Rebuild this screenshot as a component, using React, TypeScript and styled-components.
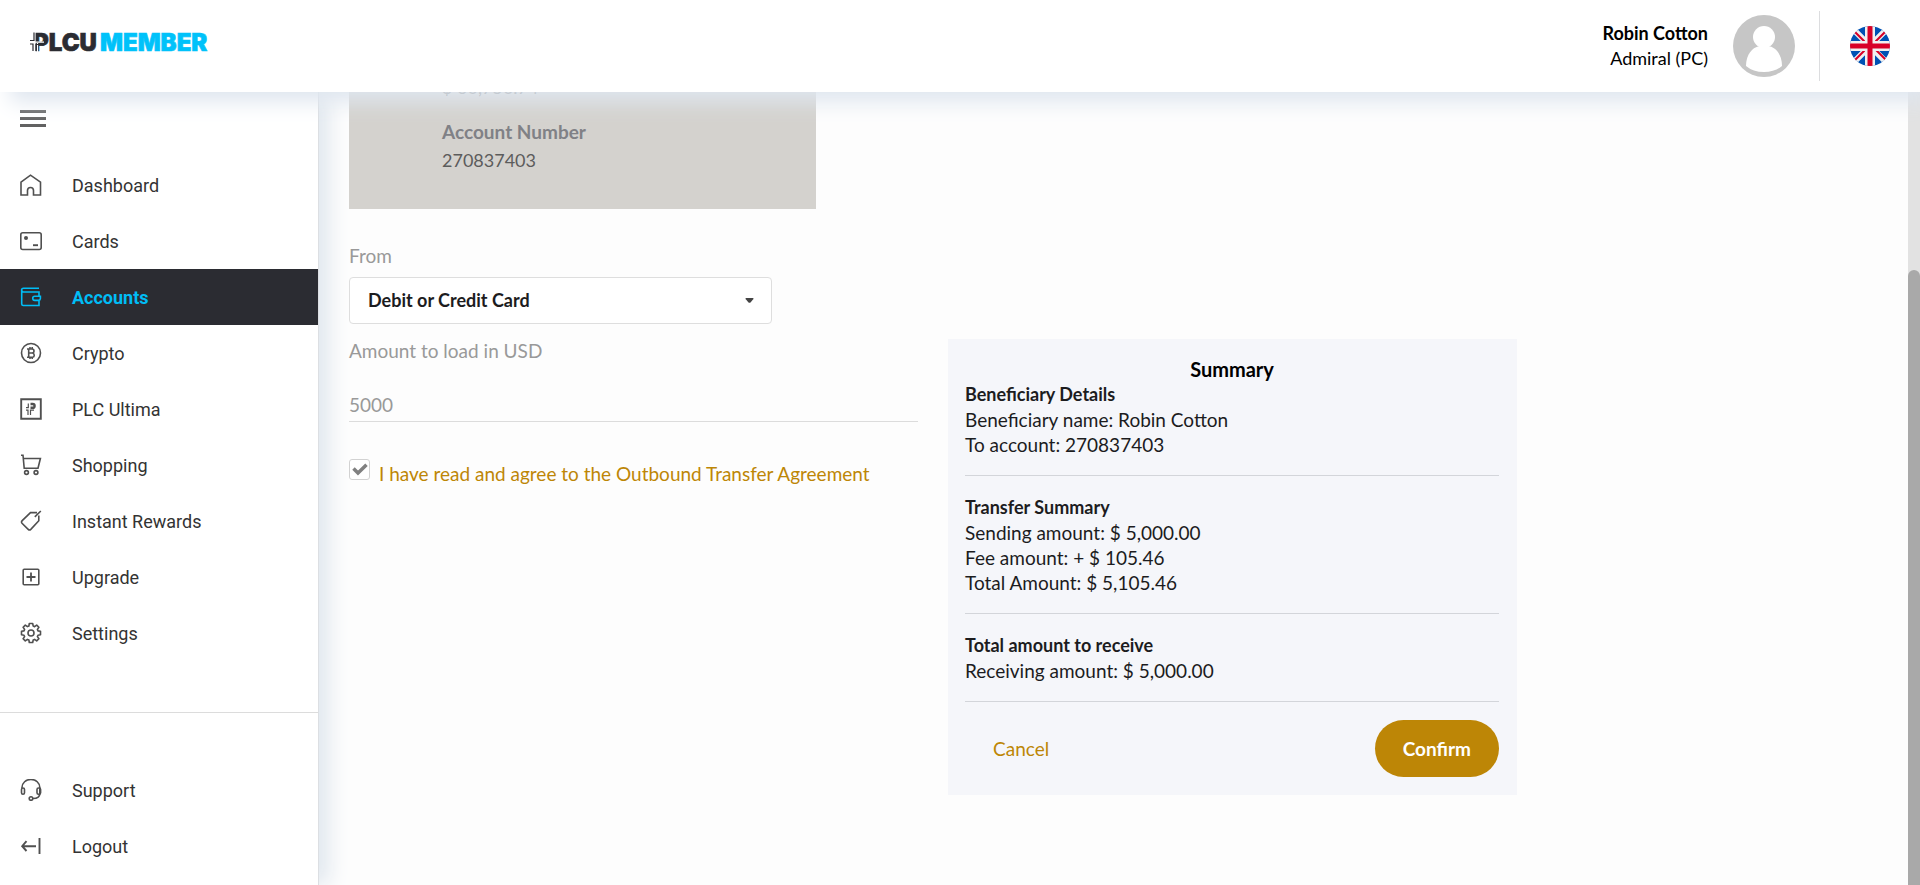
import React from "react";
import styled, { createGlobalStyle } from "styled-components";

const GlobalStyle = createGlobalStyle`
  *, *::before, *::after { box-sizing: border-box; }
  body {
    margin: 0;
    background: #fdfdfd;
    color: #1c1c1e;
    font: 400 18px/25px Lato, "Liberation Sans", sans-serif;
  }
  button, input, select { font: inherit; }
  h2, h3, p { margin: 0; }
`;

const Page = styled.div`
  display: flex;
  flex-direction: column;
  height: 100vh;
  overflow: hidden;
`;

const Header = styled.header`
  position: relative;
  z-index: 2;
  flex: none;
  display: flex;
  align-items: center;
  height: 92px;
  padding: 0 30px;
  background: #fff;
  box-shadow: 10px 10px 20px #dfe6ef;
`;

const LogoLink = styled.a`
  display: block;
  margin: 0 auto 8px 0;
  svg { display: block; }
`;

const UserInfo = styled.div`
  color: #000;
  text-align: right;
`;

const UserName = styled.div`
  font-weight: 700;
`;

const Avatar = styled.svg`
  margin: 0 24px 0 25px;
`;

const LanguageButton = styled.button`
  display: flex;
  align-items: center;
  height: 70px;
  padding: 0 0 0 30px;
  border: 0;
  border-left: 1px solid #dcdddf;
  background: none;
`;

const Body = styled.div`
  flex: 1;
  display: flex;
  min-height: 0;
`;

const Sidebar = styled.aside`
  position: relative;
  z-index: 1;
  flex: none;
  width: 319px;
  border-right: 1px solid #dcdfe3;
  background: #fff;
  box-shadow: 10px 0 20px #e0e7ee;
  font-family: Roboto, "Liberation Sans", sans-serif;
`;

const MenuButton = styled.button`
  display: flex;
  flex-direction: column;
  gap: 4px;
  margin: 18px 20px 30px;
  padding: 0;
  border: 0;
  background: none;
  span { width: 26px; height: 3px; background: #616161; }
`;

const NavList = styled.ul`
  margin: 0;
  padding: 0;
  list-style: none;
`;

const FooterNav = styled(NavList)`
  margin-top: 51px;
  padding-top: 49px;
  border-top: 1px solid #dcdcdc;
`;

const NavLink = styled.a<{ $active?: boolean }>`
  display: flex;
  align-items: center;
  gap: 30px;
  height: 56px;
  padding-left: 20px;
  background: ${(p) => (p.$active ? "#2b2c32" : "transparent")};
  color: ${(p) => (p.$active ? "#00bdf6" : "#333")};
  font-weight: ${(p) => (p.$active ? 700 : 400)};
  text-decoration: none;
  svg { color: ${(p) => (p.$active ? "#00bdf6" : "#505050")}; }
`;

const Main = styled.main`
  flex: 1;
  min-width: 0;
  padding: 0 30px;
`;

const AccountCard = styled.section`
  display: flex;
  flex-direction: column;
  justify-content: flex-end;
  max-width: 467px;
  height: 117px;
  padding: 0 93px 35px;
  overflow: hidden;
  background: #d4d2ce;
  color: #5c5c5c;
  line-height: 28px;
`;

const Balance = styled.p`
  margin-bottom: 17px;
`;

const CardLabel = styled.h3`
  color: #808186;
  font-size: 19px;
  font-weight: 700;
`;

const FieldLabel = styled.label`
  display: block;
  color: #999;
  font-size: 19px;
  line-height: 23px;
`;

const FromField = styled.div`
  max-width: 423px;
  margin: 35px 0 15px;
`;

const SelectBox = styled.div`
  display: grid;
  align-items: center;
  margin-top: 10px;
  > * { grid-area: 1 / 1; }
  svg { justify-self: end; margin-right: 18px; pointer-events: none; }
`;

const Select = styled.select`
  width: 100%;
  height: 47px;
  padding: 0 18px;
  appearance: none;
  border: 1px solid #dedede;
  border-radius: 4px;
  background: #fff;
  color: #1c1c1e;
  font-weight: 700;
`;

const Columns = styled.div`
  display: grid;
  grid-template-columns: 1fr 1fr;
  align-items: start;
  gap: 30px;
  max-width: 1168px;
`;

const AmountInput = styled.input`
  width: 100%;
  height: 34px;
  margin: 26px 0 37px;
  padding: 0;
  border: 0;
  border-bottom: 1px solid #dcdcdc;
  background: none;
  color: #999;
  font-size: 19px;
`;

const Agreement = styled.div`
  display: flex;
  gap: 9px;
  color: #bd8606;
  font-size: 19px;
  label { padding-top: 2px; }
`;

const CheckBox = styled.span`
  display: grid;
  place-items: center;
  > * { grid-area: 1 / 1; }
  height: 21px;
  svg { pointer-events: none; }
  input {
    width: 21px;
    height: 21px;
    margin: 0;
    appearance: none;
    border: 1px solid #d2d2d2;
    border-radius: 3px;
    background: #fff;
  }
`;

const Summary = styled.section`
  padding: 17px 18px 18px 17px;
  background: #f5f6fa;
`;

const SummaryTitle = styled.h2`
  font-size: 20px;
  font-weight: 700;
  line-height: 26px;
  text-align: center;
  color: #000;
`;

const Group = styled.div`
  margin-bottom: 19px;
  padding-bottom: 18px;
  border-bottom: 1px solid #d3d5da;
  font-size: 19px;
  &:last-of-type { margin-bottom: 18px; }
`;

const GroupTitle = styled.h3`
  font-size: 18px;
  font-weight: 700;
`;

const Actions = styled.footer`
  display: flex;
  justify-content: space-between;
`;

const Button = styled.button<{ $primary?: boolean }>`
  height: 57px;
  padding: 0 28px;
  border: 0;
  border-radius: 29px;
  background: ${(p) => (p.$primary ? "#bd8606" : "none")};
  color: ${(p) => (p.$primary ? "#fff" : "#bd8606")};
  font-size: 19px;
  font-weight: ${(p) => (p.$primary ? 700 : 400)};
`;

const ScrollTrack = styled.div`
  flex: none;
  width: 12px;
  padding-top: 178px;
  background: #e2e2e2;
`;

const ScrollThumb = styled.div`
  height: 100%;
  border-radius: 6px 6px 0 0;
  background: #a9a9a9;
`;

const icons: Record<string, React.ReactNode> = {
  Dashboard: <path d="M1 21V8.200L10.500 1.200 20.500 8.200V21H13.500V16.500A3 3 0 0 0 7.500 16.500V21Z" />,
  Cards: (
    <>
      <rect x=".8" y="2.700" width="20.400" height="16.800" rx="2" />
      <circle cx="6" cy="8" r="2" fill="currentColor" stroke="none" />
      <path d="M13 15.200H18" strokeWidth="1.900" />
    </>
  ),
  Accounts: (
    <>
      <path d="M19 2.200H3.500A1.800 1.800 0 0 0 3.500 6H19V10M19 15V19.500H3.300A1.600 1.600 0 0 1 1.700 18V4" />
      <path d="M20.400 10.300H14.800A2 2 0 0 0 14.800 14.400H18.500A2 2 0 0 0 20.400 12.500Z" />
    </>
  ),
  Crypto: (
    <>
      <circle cx="11" cy="11" r="9.500" />
      <path d="M7 7H12A2 2 0 0 1 12 11H8.500H12.500A2.200 2.200 0 0 1 12.500 15.300H7M8.700 7V15M10 5V7M12.200 5V7M10 15V17M12.200 15V17" />
    </>
  ),
  "PLC Ultima": (
    <>
      <path d="M1.200 1.200H20.800V20.800H1.200Z" strokeWidth="1.900" />
      <path d="M6 9.700H8.300V5.500M6 12.200H8V17M10.500 17V12.200H14" strokeWidth="1.200" />
      <path d="M10.500 6H12.700A1.900 1.900 0 0 1 12.700 9.800H10.500" strokeWidth="2.400" />
    </>
  ),
  Shopping: (
    <>
      <path d="M1 1.200H3L4.200 14.200H18L20.400 4.500H3.500" />
      <circle cx="6.500" cy="18.500" r="1.900" />
      <circle cx="16" cy="18.500" r="1.900" />
    </>
  ),
  "Instant Rewards": (
    <>
      <path d="M18.800 5.500V10.800L10.800 19.400Q9.500 20.700 8.200 19.400L2 13.200Q.9 12 2.200 10.600L10.500 2.600H17" />
      <path d="M14.800 6.800L20.800 1" />
    </>
  ),
  Upgrade: (
    <>
      <rect x="3.200" y="3.200" width="15.600" height="15.600" rx="1" />
      <path d="M11 6.500V15.500M6.500 11H15.500" strokeWidth="1.800" />
    </>
  ),
  Settings: (
    <>
      <circle cx="11" cy="11" r="3" />
      <path d="M9.300 1.500H12.700L13.200 4.100 14.600 4.700 16.700 3.100 18.900 5.300 17.400 7.400 18 8.900 20.500 9.300V12.700L18 13.200 17.400 14.600 18.900 16.700 16.700 18.900 14.600 17.400 13.200 18 12.700 20.500H9.300L8.900 18 7.400 17.400 5.300 18.900 3.100 16.700 4.600 14.600 4 13.200 1.500 12.700V9.300L4 8.900 4.600 7.400 3.100 5.300 5.300 3.100 7.400 4.600 8.900 4Z" strokeLinejoin="round" />
    </>
  ),
  Support: (
    <>
      <path d="M2 9V8.500A8.800 8 0 0 1 19.800 8.500V14.500Q19.800 19.500 13 19.500" />
      <rect x="1.500" y="9" width="3" height="6.200" rx="1.500" />
      <rect x="17" y="9" width="3.600" height="6.200" rx="1.500" />
      <circle cx="11" cy="19.500" r="1.800" />
    </>
  ),
  Logout: (
    <>
      <path d="M2.200 11.200H16M6.500 6.200L2.200 11.200L6.500 16" strokeWidth="1.900" />
      <path d="M19.500 3V19" strokeWidth="1.900" />
    </>
  ),
};

function NavItem({ label, active }: { label: string; active?: boolean }) {
  return (
    <li>
      <NavLink href="#" $active={active} aria-current={active ? "page" : undefined}>
        <svg width="22" height="22" viewBox="0 0 22 22" fill="none" stroke="currentColor" strokeWidth="1.600" aria-hidden="true">
          {icons[label]}
        </svg>
        {label}
      </NavLink>
    </li>
  );
}

const mainLinks = ["Dashboard", "Cards", "Accounts", "Crypto", "PLC Ultima", "Shopping", "Instant Rewards", "Upgrade", "Settings"];
const footerLinks = ["Support", "Logout"];

const groups = [
  { title: "Beneficiary Details", lines: ["Beneficiary name: Robin Cotton", "To account: 270837403"] },
  { title: "Transfer Summary", lines: ["Sending amount: $ 5,000.00", "Fee amount: + $ 105.46", "Total Amount: $ 5,105.46"] },
  { title: "Total amount to receive", lines: ["Receiving amount: $ 5,000.00"] },
];

function Logo() {
  return (
    <svg width="186" height="36" viewBox="0 -7 186 36" fontFamily="Inter, sans-serif" fontWeight="900" fontSize="24">
      <text x="3" y="20" fill="#2b2c32" stroke="#2b2c32" strokeWidth=".6">PLCU</text>
      <text x="70" y="20" fill="#00c2fa" stroke="#00c2fa" strokeWidth=".6">MEMBER</text>
      <path d="M0 0H5V22H0Z" fill="#fff" />
      <path d="M0 11.200H14M5 0V22M7.500 12V22" stroke="#fff" strokeWidth="1.200" />
      <path d="M0 9.500H4V1.500M0 13H3V20M6 20V13.500H11" stroke="#2b2c32" strokeWidth="1.200" fill="none" />
    </svg>
  );
}

function Flag() {
  return (
    <svg width="40" height="40" viewBox="0 0 40 40">
      <clipPath id="round"><circle cx="20" cy="20" r="20" /></clipPath>
      <g clipPath="url(#round)">
        <path fill="#0052b4" d="M0 0H40V40H0Z" />
        <path stroke="#f0f0f0" strokeWidth="6" d="M0 0L40 40M40 0L0 40" />
        <path stroke="#d80027" strokeWidth="2" d="M0 1L18 19M22 20L40 38M40 1L22 19M18 21L0 39" />
        <path stroke="#f0f0f0" strokeWidth="10" d="M20 0V40M0 20H40" />
        <path stroke="#d80027" strokeWidth="5" d="M20 0V40M0 20H40" />
      </g>
    </svg>
  );
}

export default function App() {
  return (
    <Page>
      <GlobalStyle />
      <Header>
        <LogoLink href="#" aria-label="PLCU Member"><Logo /></LogoLink>
        <UserInfo>
          <UserName>Robin Cotton</UserName>
          <div>Admiral (PC)</div>
        </UserInfo>
        <Avatar width="62" height="62" viewBox="0 0 62 62" aria-hidden="true">
          <circle cx="31" cy="31" r="31" fill="#c6c6c6" />
          <circle cx="31" cy="22" r="11" fill="#fff" />
          <path d="M13 51C13 39 20 32.500 25 31.500H37C42 32.500 49 39 49 51Q42 57 31 57T13 51Z" fill="#fff" />
        </Avatar>
        <LanguageButton type="button" aria-label="Language"><Flag /></LanguageButton>
      </Header>
      <Body>
        <Sidebar>
          <MenuButton type="button" aria-label="Menu"><span /><span /><span /></MenuButton>
          <NavList>
            {mainLinks.map((label) => <NavItem key={label} label={label} active={label === "Accounts"} />)}
          </NavList>
          <FooterNav>
            {footerLinks.map((label) => <NavItem key={label} label={label} />)}
          </FooterNav>
        </Sidebar>
        <Main>
          <AccountCard>
            <Balance>$ 60,750.74</Balance>
            <CardLabel>Account Number</CardLabel>
            <p>270837403</p>
          </AccountCard>
          <FromField>
            <FieldLabel htmlFor="from">From</FieldLabel>
            <SelectBox>
              <Select id="from" defaultValue="card">
                <option value="card">Debit or Credit Card</option>
              </Select>
              <svg width="9" height="5" viewBox="0 0 9 5" fill="#444" aria-hidden="true">
                <path d="M1 0H8Q9 .5 8 1.500L5.500 4.500Q4.500 5.200 3.500 4.500L1 1.500Q0 .5 1 0Z" />
              </svg>
            </SelectBox>
          </FromField>
          <Columns>
            <div>
              <FieldLabel htmlFor="amount">Amount to load in USD</FieldLabel>
              <AmountInput id="amount" defaultValue="5000" />
              <Agreement>
                <CheckBox>
                  <input id="agree" type="checkbox" defaultChecked />
                  <svg width="16" height="13" viewBox="0 0 16 13" fill="none" stroke="#808080" strokeWidth="3.500" aria-hidden="true">
                    <path d="M1.500 5.500L6 10L14.500 1.800" />
                  </svg>
                </CheckBox>
                <label htmlFor="agree">I have read and agree to the Outbound Transfer Agreement</label>
              </Agreement>
            </div>
            <Summary>
              <SummaryTitle>Summary</SummaryTitle>
              {groups.map((group) => (
                <Group key={group.title}>
                  <GroupTitle>{group.title}</GroupTitle>
                  {group.lines.map((line) => <p key={line}>{line}</p>)}
                </Group>
              ))}
              <Actions>
                <Button type="button">Cancel</Button>
                <Button type="button" $primary>Confirm</Button>
              </Actions>
            </Summary>
          </Columns>
        </Main>
        <ScrollTrack><ScrollThumb /></ScrollTrack>
      </Body>
    </Page>
  );
}
